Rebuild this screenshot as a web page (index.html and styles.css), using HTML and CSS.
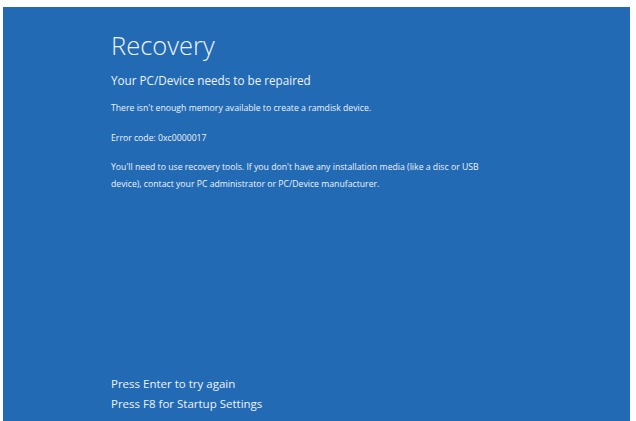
FILE: index.html
```html
<!DOCTYPE html>
<html lang="en">
<head>
  <meta charset="UTF-8">
  <title>Recovery</title>
  <link rel="stylesheet" href="styles.css">
</head>
<body>
  <div class="screen">
    <div class="content">
      <h1>Recovery</h1>
      <h2>Your PC/Device needs to be repaired</h2>
      <p>There isn't enough memory available to create a ramdisk device.</p>
      <p class="code">Error code: 0xc0000017</p>
      <p class="advice">You'll need to use recovery tools. If you don't have any installation media (like a disc or USB device), contact your PC administrator or PC/Device manufacturer.</p>
    </div>
    <div class="keys">
      <div>Press Enter to try again</div>
      <div>Press F8 for Startup Settings</div>
    </div>
  </div>
</body>
</html>
```

FILE: styles.css
```css
html, body {
  margin: 0;
  height: 100%;
  background: #fff;
}
body {
  padding: 7px 6px 0 3px;
  box-sizing: border-box;
  font-family: "Open Sans", "Noto Sans", sans-serif;
  color: #eef3fa;
}
.screen {
  height: 100%;
  background: #236ab4;
  display: flex;
  flex-direction: column;
  justify-content: space-between;
  padding: 0 0 7px 108px;
  box-sizing: border-box;
}
.content {
  width: 385px;
}
h1 {
  margin: 22px 0 0;
  font-size: 25.5px;
  font-weight: 300;
  line-height: 32px;
}
h2 {
  margin: 10px 0 0;
  font-size: 11.7px;
  font-weight: 400;
  line-height: 18px;
}
p {
  margin: 11px 0 0;
  font-size: 8.7px;
  line-height: 17px;
}
.code {
  margin-top: 13px;
}
.advice {
  margin-top: 12px;
}
.keys {
  font-size: 11.5px;
  line-height: 20px;
}
```
